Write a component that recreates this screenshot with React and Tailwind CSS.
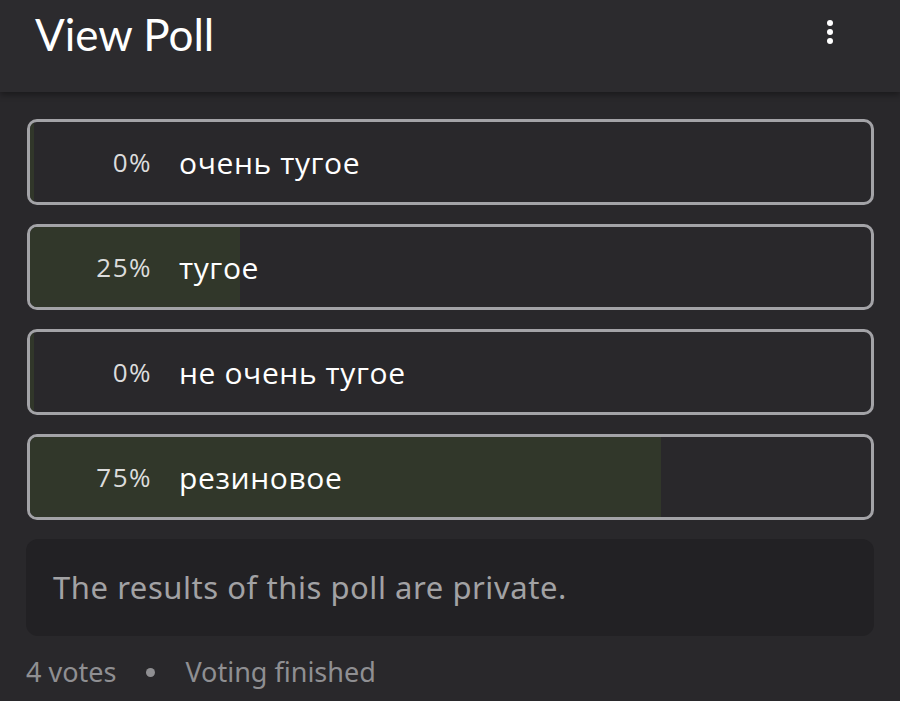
const options = [
  { pct: 0, label: 'очень тугое' },
  { pct: 25, label: 'тугое' },
  { pct: 0, label: 'не очень тугое' },
  { pct: 75, label: 'резиновое' },
];

function PollOption({ pct, label }) {
  return (
    <div className="relative h-[86px] rounded-[10px] border-[3px] border-[#a3a3a7] overflow-hidden">
      <div
        className="absolute inset-y-0 left-0 bg-[#31372a]"
        style={{ width: pct === 0 ? '4px' : `${pct}%` }}
      />
      <div className="relative flex h-full items-center">
        <span className="w-[122px] text-right text-[26px] tracking-[1.5px] text-[#dcdcdc] font-['Open_Sans',sans-serif]">
          {pct}%
        </span>
        <span className="ml-[27px] text-[30px] tracking-[0.6px] text-white font-['Open_Sans',sans-serif]">
          {label}
        </span>
      </div>
    </div>
  );
}

export default function App() {
  return (
    <div className="min-h-[701px] bg-[#29282b] font-['Lato',sans-serif]">
      <header className="relative h-[92px] bg-[#2c2b2e] shadow-[0_3px_6px_rgba(0,0,0,0.35)] flex items-start justify-between pl-[35px] pr-[67px]">
        <h1 className="mt-[10px] text-[44px] leading-[48px] text-white">View Poll</h1>
        <div className="mt-[20px] flex flex-col items-center gap-[3px]">
          <span className="block h-[6px] w-[6px] rounded-full bg-white" />
          <span className="block h-[6px] w-[6px] rounded-full bg-white" />
          <span className="block h-[6px] w-[6px] rounded-full bg-white" />
        </div>
      </header>
      <main className="px-[26px] pt-[27px]">
        <div className="flex flex-col gap-[19px] pl-px">
          {options.map((o, i) => (
            <PollOption key={i} {...o} />
          ))}
        </div>
        <div className="mt-[19px] h-[97px] rounded-[12px] bg-[#222124] flex items-center px-[27px]">
          <p className="text-[31px] text-[#a2a2a4] tracking-[0.55px] font-['Noto_Sans',sans-serif]">
            The results of this poll are private.
          </p>
        </div>
        <div className="mt-[16px] flex items-center text-[27px] text-[#8f8f92] font-['Noto_Sans',sans-serif]">
          <span>4 votes</span>
          <span className="mx-[30px] block h-[9px] w-[9px] rounded-full bg-[#8f8f92]" />
          <span>Voting finished</span>
        </div>
      </main>
    </div>
  );
}
